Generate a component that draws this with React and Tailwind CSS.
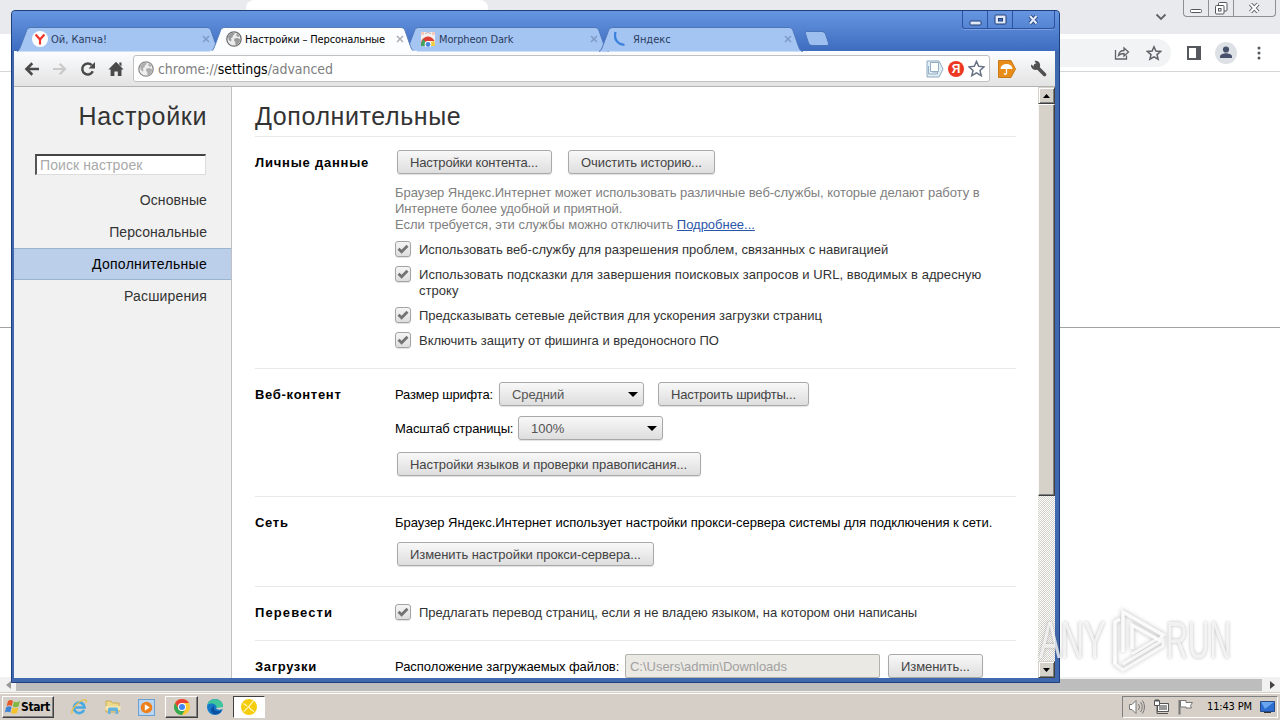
import React from "react";

const ui = "font-['Liberation_Sans',Arial,sans-serif]";
const tahoma = "font-['DejaVu_Sans_Condensed','DejaVu_Sans',sans-serif] [font-stretch:condensed]";

function YandexY() {
  return (
    <svg width="16" height="16" viewBox="0 0 16 16">
      <circle cx="8" cy="8" r="8" fill="#fff" />
      <path d="M3.6 3.6 8 8.6 12.4 3.6M8 8.6v5" fill="none" stroke="#f0332b" strokeWidth="2.2" />
    </svg>
  );
}

function Globe() {
  return (
    <svg width="16" height="16" viewBox="0 0 16 16">
      <circle cx="8" cy="8" r="7.2" fill="#ececec" stroke="#6f6f6f" strokeWidth="1.3" />
      <path d="M2 5.2 4.4 2.4 8 1.6 8.8 3 7 4.6 6.4 6.6 4.8 7.2 5.6 9 4.6 10.4 2.8 9zM8.4 7.6l3.2-.6 2.6 1.2-.6 3-2.8 3-1.6-.6.2-2.4-1.4-1.6zM10.6 2.6l2.2 1.4.8 1.6-2 .2-1.4-1.4z" fill="#9a9a9a" />
    </svg>
  );
}

function StoreIcon() {
  return (
    <svg width="16" height="16" viewBox="0 0 16 16">
      <path d="M1 1h14v14H1z" fill="#f3efee" />
      <path d="M1 1h3v3H1zM12 1h3v3h-3z" fill="#f6c9bd" />
      <path d="M5 2.5q3-2 6 0" stroke="#b9b4b4" fill="none" />
      <path d="M1 13a7 7 0 0 1 13.500-3L8 10z" fill="#dd3d33" />
      <path d="M1 13q.5-3 2.500-5L6 12l-1 3H1z" fill="#43a35b" />
      <path d="M10 11l4.500-1q.5 2 .5 5h-4z" fill="#f1cb43" />
      <circle cx="8" cy="13.400" r="3.300" fill="#fff" />
      <circle cx="8" cy="13.500" r="2.400" fill="#4c86d8" />
    </svg>
  );
}

function Spinner() {
  return (
    <svg width="16" height="16" viewBox="0 0 16 16">
      <path d="M1.500 1C-.5 8 3.500 13.500 10.500 13.800" fill="none" stroke="#3b82dc" strokeWidth="2.300" />
    </svg>
  );
}

function Tab({ icon, title, active, spacing }) {
  return (
    <div className={`relative h-[24px] w-[194px] shrink-0 ${active ? "z-10" : ""}`}>
      <svg className="absolute left-[-6px] top-0" width="212" height="25" viewBox="0 0 212 25">
        <path
          d="M3 24.500C5 24 6 21 7.500 17L12 5C13 1.500 14.500 .5 17 .5H192C195 .5 196.500 1.500 197.500 5L202 18C203.500 22.500 204.500 24 207 24.500"
          fill={active ? "#fcfdff" : "#a4c4f2"}
          stroke={active ? "#5a7fb8" : "#4d76b9"}
          strokeWidth="1"
        />
        {active && <path d="M2 24.500H209" stroke="#fcfdff" strokeWidth="1.500" />}
      </svg>
      <div className={`relative flex h-full items-center pl-[12px] text-[11px] ${tahoma} ${active ? "text-black" : "text-[#2a3d5e]"}`}>
        {icon}
        <span className={`ml-[3px] flex-1 whitespace-nowrap pt-[2px] ${spacing}`}>{title}</span>
        <svg className="mr-[4px]" width="8" height="8" viewBox="0 0 8 8">
          <path d="M1 1l6 6M7 1L1 7" stroke={active ? "#a9adb5" : "#7e9ac6"} strokeWidth="1.500" />
        </svg>
      </div>
    </div>
  );
}

function Button({ children, className = "" }) {
  return (
    <button className={`flex h-6 shrink-0 items-center whitespace-nowrap rounded-[3px] border border-[#a9a9a9] bg-gradient-to-b from-[#f8f8f8] to-[#dedede] pl-3 pt-[2px] text-[13px] text-[#444] shadow-[0_1px_1px_rgba(0,0,0,0.12)] ${className}`}>
      {children}
    </button>
  );
}

function Select({ value, spacing }) {
  return (
    <div className="flex h-6 w-[145px] items-center justify-between rounded-[3px] border border-[#a9a9a9] bg-gradient-to-b from-[#f8f8f8] to-[#dedede] pl-3 pr-[5px] text-[13px] text-[#555] shadow-[0_1px_1px_rgba(0,0,0,0.12)]">
      <span className={`pt-[2px] ${spacing}`}>{value}</span>
      <svg width="10" height="5" viewBox="0 0 10 5"><path d="M0 0h10L5 5z" fill="#000" /></svg>
    </div>
  );
}

function Check({ children }) {
  return (
    <label className="flex items-start text-[13px] leading-4 text-[#333]">
      <span className="mr-2 flex h-4 w-4 shrink-0 items-center justify-center rounded-[3px] border border-[#a3a3a3] bg-gradient-to-b from-[#f5f5f5] to-[#dedede] shadow-[0_1px_1px_rgba(0,0,0,0.12)]">
        <svg width="12" height="10" viewBox="0 0 12 10"><path d="M1.500 4.800 4.600 7.800 10.500 1.800" fill="none" stroke="#737373" strokeWidth="2.800" /></svg>
      </span>
      <span className="-mb-px whitespace-nowrap pt-px">{children}</span>
    </label>
  );
}

function Section({ title, spacing, className = "", titleClass = "pt-px", children }) {
  return (
    <section className={`flex w-[761px] border-t border-[#e8e8e8] ${className}`}>
      <h2 className={`w-[140px] shrink-0 text-[13px] font-bold leading-4 text-black ${titleClass}`}>
        <span className={spacing}>{title}</span>
      </h2>
      <div className="flex-1 text-[13px] leading-4">{children}</div>
    </section>
  );
}

function CaptionButtons() {
  return (
    <div className="flex h-[18px] w-[93px] rounded-b-[3px] border border-t-0 border-[#2d529f] shadow-[0_1px_0_#7ba0e4]">
      <div className="flex w-[25px] items-center justify-center border-r border-[#2d529f]">
        <svg width="13" height="12" viewBox="0 0 13 12"><rect x="1" y="7" width="11" height="4" rx="1" fill="#dfe9fa" stroke="#233e75" /></svg>
      </div>
      <div className="flex w-[25px] items-center justify-center border-r border-[#2d529f]">
        <svg width="13" height="12" viewBox="0 0 13 12">
          <rect x="1" y="1" width="11" height="9" rx="1" fill="#dfe9fa" stroke="#233e75" />
          <rect x="4.500" y="4.500" width="4" height="2.500" fill="#4270c4" stroke="#233e75" />
        </svg>
      </div>
      <div className="flex flex-1 items-center justify-center">
        <svg width="13" height="12" viewBox="0 0 13 12">
          <path d="M3 2l6.500 7.500M9.500 2 3 9.500" stroke="#233e75" strokeWidth="4" />
          <path d="M3 2l6.500 7.500M9.500 2 3 9.500" stroke="#dfe9fa" strokeWidth="2.200" />
        </svg>
      </div>
    </div>
  );
}

function Toolbar() {
  return (
    <div className="flex h-[36px] items-center border-b border-[#b3b3b3] bg-gradient-to-b from-[#fcfdff] to-[#e3e3e3]">
      <div className="flex w-[119px] items-center">
        <svg className="ml-[10px]" width="16" height="16" viewBox="0 0 16 16"><path d="M15 8H3M8.300 2.300 2.500 8l5.800 5.700" fill="none" stroke="#4a4a4a" strokeWidth="2.600" /></svg>
        <svg className="ml-[12px]" width="16" height="16" viewBox="0 0 16 16"><path d="M1 8h12M7.700 2.800 13 8l-5.300 5.200" fill="none" stroke="#c9c9c9" strokeWidth="2.200" /></svg>
        <svg className="ml-[12px]" width="16" height="16" viewBox="0 0 16 16">
          <path d="M12.800 10.200A5.500 5.500 0 1 1 11.800 4.200" fill="none" stroke="#4a4a4a" strokeWidth="2.500" />
          <path d="M15 1v6.500H8.500z" fill="#4a4a4a" />
        </svg>
        <svg className="ml-[12px]" width="16" height="16" viewBox="0 0 16 16"><path d="M8 .8 15.600 8.500H13.500V15H9.800v-4.500H6.400V15H2.600V8.500H.4zM11.300 1.500h2.200v4l-2.200-2z" fill="#4a4a4a" /></svg>
      </div>
      <div className="flex h-[27px] w-[857px] items-center rounded-[3px] border border-[#c0c0c0] bg-white pl-[4px]">
        <span className="opacity-80"><Globe /></span>
        <span className={`ml-[4px] flex-1 whitespace-nowrap pt-px text-[14px] text-[#808080] ${tahoma} tracking-[-0.05px]`}>
          chrome://<span className="text-black">settings</span>/advanced
        </span>
        <svg width="18" height="18" viewBox="0 0 18 18">
          <path d="M1 1h12l4 8-4 8H1z" fill="#e4eef5" stroke="#8ba9c0" />
          <path d="M4.500 2.500h8v9h-8z" fill="#fff" stroke="#92afc5" />
          <path d="M2.500 6v8h9v-2h-5" fill="none" stroke="#92afc5" />
        </svg>
        <span className="ml-[4px] flex h-4 w-4 items-center justify-center rounded-full bg-[#ec3823] text-[12px] font-bold leading-none text-white">Я</span>
        <svg className="ml-[4px] mr-[4px]" width="17" height="17" viewBox="0 0 17 17"><path d="M8.500 1.300l2.200 5 5.300.5-4 3.600 1.200 5.300-4.700-2.800-4.700 2.800L5 10.400 1 6.800l5.300-.5z" fill="#fff" stroke="#697386" strokeWidth="1.500" /></svg>
      </div>
      <svg className="ml-[8px]" width="18" height="18" viewBox="0 0 18 18">
        <path d="M.5 .5H13l4.500 8.500-4.500 8.500H.5z" fill="#e98d19" stroke="#c87a1b" />
        <path d="M2.500 9a6 5 0 0 1 12 0z" fill="#fff" />
        <path d="M8.500 8v5.500q-1 1.500-2.500 0" fill="none" stroke="#fff" strokeWidth="1.300" />
      </svg>
      <svg className="ml-[14px]" width="17" height="17" viewBox="0 0 17 17">
        <path d="M5.500 5.500l9 9" stroke="#505050" strokeWidth="3.600" strokeLinecap="round" />
        <path d="M4.500.8A4.600 4.600 0 1 1 1 4.500l3 2 2.500-2.300z" fill="#505050" />
      </svg>
    </div>
  );
}

function Sidebar() {
  const items = [
    ["Основные", "tracking-[0.1px]"],
    ["Персональные", "tracking-[0.05px]"],
    ["Дополнительные", "tracking-[0.3px]"],
    ["Расширения", "tracking-[0.15px]"],
  ];
  return (
    <aside className="flex w-[218px] shrink-0 flex-col border-r border-[#c0c0c0] bg-[#f1f1f1]">
      <h1 className="mr-6 mt-[12px] h-[35px] text-right text-[25px] leading-[34px] tracking-[0.65px] text-[#333]">Настройки</h1>
      <div className="ml-[21px] mt-[20px] flex h-[21px] w-[171px] items-center border border-b-[#ddd] border-l-2 border-r-[#ddd] border-t-2 border-l-[#555] border-t-[#444] bg-white pl-[3px] text-[14px] tracking-[0.1px] text-[#a9a9a9]">Поиск настроек</div>
      <nav className="mt-[9px]">
        {items.map(([name, sp], i) => (
          <div key={name} className={`flex h-8 items-center justify-end border-y pr-6 pt-px text-[14px] ${sp} ${i === 2 ? "border-[#9bb4cf] bg-[#bbceea] text-black" : "border-transparent text-[#333]"}`}>{name}</div>
        ))}
      </nav>
    </aside>
  );
}

function ScrollButton({ down }) {
  return (
    <div className="flex h-[17px] w-[17px] shrink-0 items-center justify-center border border-b-[#404040] border-l-[#d6d2ca] border-r-[#404040] border-t-[#d6d2ca] bg-[#d6d2ca] shadow-[inset_1px_1px_0_#fff,inset_-1px_-1px_0_#808080]">
      <svg width="7" height="4" viewBox="0 0 7 4"><path d={down ? "M0 0h7L3.500 4z" : "M0 4h7L3.500 0z"} fill="#000" /></svg>
    </div>
  );
}

function Settings() {
  return (
    <div className="flex h-[591px] overflow-hidden bg-white">
      <Sidebar />
      <main className="ml-[23px] flex-1">
        <h1 className="h-[49px] pt-[12px] text-[25px] leading-[34px] tracking-[0.6px] text-[#333]">Дополнительные</h1>
        <Section title="Личные данные" className="h-[232px] pt-[13px]" titleClass="pt-[5px]" spacing="tracking-[0.78px]">
          <div className="ml-[2px] flex gap-4">
            <Button className="w-[155px] tracking-[-0.18px]">Настройки контента...</Button>
            <Button className="w-[147px] tracking-[-0.07px]">Очистить историю...</Button>
          </div>
          <p className="mt-[11px] whitespace-nowrap text-[#808080]">
            <span className="tracking-[-0.05px]">Браузер Яндекс.Интернет может использовать различные веб-службы, которые делают работу в</span><br />
            <span className="tracking-[-0.13px]">Интернете более удобной и приятной.</span><br />
            <span className="tracking-[-0.02px]">Если требуется, эти службы можно отключить <a className="text-[#2a56a8] underline">Подробнее...</a></span>
          </p>
          <div className="mt-[8px] flex flex-col gap-[9px]">
            <Check><span className="tracking-[0px]">Использовать веб-службу для разрешения проблем, связанных с навигацией</span></Check>
            <Check><span className="tracking-[0.05px]">Использовать подсказки для завершения поисковых запросов и URL, вводимых в адресную<br />строку</span></Check>
            <Check><span className="tracking-[0px]">Предсказывать сетевые действия для ускорения загрузки страниц</span></Check>
            <Check><span className="tracking-[-0.02px]">Включить защиту от фишинга и вредоносного ПО</span></Check>
          </div>
        </Section>
        <Section title="Веб-контент" className="h-[128px] pt-[13px]" titleClass="pt-[5px]" spacing="tracking-[0.7px]">
          <div className="flex items-center">
            <span className="w-[104px] whitespace-nowrap pt-px tracking-[-0.16px]">Размер шрифта:</span>
            <Select value="Средний" spacing="tracking-[-0.1px]" />
            <Button className="ml-[14px] w-[151px] tracking-[-0.2px]">Настроить шрифты...</Button>
          </div>
          <div className="mt-[10px] flex items-center">
            <span className="w-[123px] whitespace-nowrap pt-px tracking-[-0.16px]">Масштаб страницы:</span>
            <Select value="100%" spacing="tracking-[0px]" />
          </div>
          <Button className="ml-[2px] mt-[12px] w-[304px] tracking-[-0.05px]">Настройки языков и проверки правописания...</Button>
        </Section>
        <Section title="Сеть" className="h-[90px] pt-[17px]" spacing="tracking-[0.7px]">
          <p className="whitespace-nowrap pt-px tracking-[-0.02px]">Браузер Яндекс.Интернет использует настройки прокси-сервера системы для подключения к сети.</p>
          <Button className="ml-[2px] mt-[11px] w-[257px] tracking-[-0.06px]">Изменить настройки прокси-сервера...</Button>
        </Section>
        <Section title="Перевести" className="h-[54px] pt-[17px]" spacing="tracking-[1.1px]">
          <Check><span className="tracking-[-0.03px]">Предлагать перевод страниц, если я не владею языком, на котором они написаны</span></Check>
        </Section>
        <Section title="Загрузки" className="h-[54px] pt-[13px]" titleClass="pt-[5px]" spacing="tracking-[0.65px]">
          <div className="flex items-center whitespace-nowrap">
            <span className="w-[230px] pt-px tracking-[-0.05px]">Расположение загружаемых файлов:</span>
            <span className="flex h-6 w-[255px] items-center rounded-[2px] border border-[#b3b1ab] bg-[#ebe9e4] pl-1 pt-[2px] tracking-[-0.02px] text-[#a0a0a0]">C:\Users\admin\Downloads</span>
            <Button className="ml-2 w-[95px] tracking-[-0.06px]">Изменить...</Button>
          </div>
        </Section>
      </main>
      <div className="flex w-[17px] flex-col bg-[#e9e7e3]">
        <ScrollButton />
        <div className="h-[392px] border border-b-[#404040] border-l-[#f8f8f6] border-r-[#404040] border-t-white bg-[#d6d2ca] shadow-[inset_-1px_-1px_0_#808080]" />
        <div className="flex-1 bg-[repeating-conic-gradient(#d2cfc9_0_25%,#fff_0_50%)] bg-[length:2px_2px]" />
        <ScrollButton down />
      </div>
    </div>
  );
}

function FrontWindow() {
  return (
    <div className="absolute left-[11px] top-[10px] h-[673px] w-[1049px] overflow-hidden rounded-t-[4px] border border-[#1f3f7c] bg-[#3f68ae]">
      <div className="flex h-[40px] items-end bg-gradient-to-b from-[#6696e0] to-[#3e6cc0] pl-[8px]">
        <Tab icon={<YandexY />} title="Ой, Капча!" spacing="tracking-[0px]" />
        <Tab icon={<Globe />} title="Настройки – Персональные" active spacing="tracking-[-0.15px]" />
        <Tab icon={<StoreIcon />} title="Morpheon Dark" spacing="tracking-[-0.15px]" />
        <Tab icon={<Spinner />} title="Яндекс" spacing="tracking-[0px]" />
        <svg className="mb-[4px] ml-[8px]" width="26" height="16" viewBox="0 0 26 16"><path d="M2.500.5H18q2.500 0 3.500 2.500l3 9q.5 2.500-1.500 2.500H8q-2.500 0-3.500-2.500l-3-9Q.500.5 2.500.5z" fill="#9dbff0" stroke="#4a74ba" /></svg>
        <div className="ml-auto self-start pr-[4px]"><CaptionButtons /></div>
      </div>
      <div className="ml-[2px] w-[1041px]">
        <Toolbar />
        <Settings />
      </div>
    </div>
  );
}

function BackWindow() {
  return (
    <div className="flex h-[693px] flex-col bg-white">
      <div className="flex h-[34px] items-start bg-[#e8eaed]">
        <div className="ml-[246px] h-full w-[242px] rounded-t-lg bg-white" />
        <svg className="ml-auto mt-[13px]" width="12" height="8" viewBox="0 0 12 8"><path d="M1.500 1.500 6 6l4.500-4.500" fill="none" stroke="#5f6368" strokeWidth="1.800" /></svg>
        <div className="ml-[16px] mr-[4px] flex h-[17px] w-[93px] rounded-b-[4px] border border-t-0 border-[#8e8f92]">
          <div className="flex w-[25px] items-center justify-center border-r border-[#8e8f92]"><svg width="13" height="6" viewBox="0 0 13 6" className="mt-[5px]"><rect x=".5" y="1.500" width="11" height="3" rx="1" fill="#fff" stroke="#55565c" /></svg></div>
          <div className="flex w-[25px] items-center justify-center border-r border-[#8e8f92]"><svg width="13" height="13" viewBox="0 0 13 13"><rect x="3.500" y=".5" width="8.500" height="8.500" rx="1" fill="#fff" stroke="#55565c" /><rect x=".5" y="3.500" width="8.500" height="8.500" rx="1" fill="#fff" stroke="#55565c" /><rect x="3.500" y="6.500" width="2.500" height="2.500" fill="#fff" stroke="#55565c" /></svg></div>
          <div className="flex flex-1 items-center justify-center"><svg width="13" height="12" viewBox="0 0 13 12"><path d="M2.500 2l7.500 8M10 2l-7.500 8" stroke="#55565c" strokeWidth="4" /><path d="M2.500 2l7.500 8M10 2l-7.500 8" stroke="#fff" strokeWidth="2.200" /></svg></div>
        </div>
      </div>
      <div className="flex h-[38px] shrink-0 items-center border-b border-[#d5d6d8]">
        <div className="ml-[120px] flex h-[28px] w-[1051px] items-center justify-end rounded-full bg-[#f1f3f4] pr-[9px]">
          <svg width="16" height="16" viewBox="0 0 16 16"><path d="M1.500 5v9h11v-3.500M4.500 10.500c.5-3.500 2.500-5 5.500-5V3l4.500 4-4.500 4V8.500c-2.500 0-4 .5-5.500 2z" fill="none" stroke="#5f6368" strokeWidth="1.300" /></svg>
          <svg className="ml-[16px]" width="16" height="16" viewBox="0 0 16 16"><path d="M8 1.800l1.900 4.300 4.700.4-3.600 3.100 1.100 4.600L8 11.800l-4.100 2.400L5 9.600 1.400 6.500l4.700-.4z" fill="none" stroke="#5f6368" strokeWidth="1.500" /></svg>
        </div>
        <svg className="ml-[16px]" width="14" height="14" viewBox="0 0 14 14"><path d="M1 1h12v12H1z" fill="none" stroke="#55585d" strokeWidth="2" /><path d="M9 1h4v12H9z" fill="#55585d" /></svg>
        <svg className="ml-[14px]" width="22" height="22" viewBox="0 0 22 22"><circle cx="11" cy="11" r="11" fill="#dde1e6" /><circle cx="11" cy="7.500" r="3.100" fill="#46506b" /><path d="M5 16v-1.500c0-2.500 4-3.300 6-3.300s6 .8 6 3.300V16z" fill="#46506b" /></svg>
        <svg className="ml-[20px]" width="4" height="14" viewBox="0 0 4 14"><circle cx="2" cy="2" r="1.500" fill="#55585d" /><circle cx="2" cy="7" r="1.500" fill="#55585d" /><circle cx="2" cy="12" r="1.500" fill="#55585d" /></svg>
      </div>
      <div className="h-[256px] shrink-0 border-b border-[#a2a2a2]" />
      <div className="flex-1" />
      <div className="flex h-[15px] items-center justify-between bg-[#f1f1f1]">
        <svg className="ml-[6px]" width="5" height="8" viewBox="0 0 5 8"><path d="M5 0v8L0 4z" fill="#999" /></svg>
        <div className="ml-[5px] h-[12px] flex-1 bg-[#bdbdbd]" />
        <svg className="ml-[8px] mr-[5px]" width="5" height="8" viewBox="0 0 5 8"><path d="M0 0v8l5-4z" fill="#444" /></svg>
      </div>
      <div className="h-[1px] bg-[#d4d0c8]" />
    </div>
  );
}

function Watermark() {
  const word = "[text-shadow:0_0_4px_rgba(90,90,90,0.45)] text-white/75";
  return (
    <div className="absolute left-[1039px] top-[607px] flex h-[68px] w-[200px] items-center font-['Liberation_Sans',Arial,sans-serif] text-[51px] font-normal">
      <span className={`${word} w-[70px] origin-left scale-x-[0.64] tracking-[-0.5px]`}>ANY</span>
      <svg width="60" height="66" viewBox="0 0 60 66" className="shrink-0 [filter:drop-shadow(0_0_2px_rgba(80,80,80,0.45))]">
        <path d="M6 56V14l5-3M14 44V4l40 23-4 5-27-15v24" fill="none" stroke="#fff" strokeOpacity=".9" strokeWidth="3.500" />
        <path d="M6 48v8l8 6 40-24v-6L14 56M23 46l25-15" fill="none" stroke="#fff" strokeOpacity=".8" strokeWidth="3" />
      </svg>
      <span className={`${word} ml-[-3px] origin-left scale-x-[0.59]`}>RUN</span>
    </div>
  );
}

function Taskbar() {
  const raised = "border border-b-[#404040] border-l-white border-r-[#404040] border-t-white shadow-[inset_-1px_-1px_0_#808080]";
  return (
    <div className={`flex h-[27px] items-center border-t border-white bg-[#d6cfc7] pl-[2px] ${tahoma}`}>
      <div className={`flex h-[22px] w-[52px] items-center pl-[1px] ${raised}`}>
        <svg width="17" height="16" viewBox="0 0 17 16" className="shrink-0">
          <path d="M4 2q2.500-1.800 5 0L7.800 7Q5 5.600 2.600 7z" fill="#e65a28" />
          <path d="M10 2.500q3 1.500 6-.5l-1.500 5.500q-3 1.500-5.800 0z" fill="#80b842" />
          <path d="M2.300 8q2.700-1.600 5.300 0l-1.400 5.500Q3.500 12 .8 13.500z" fill="#3f83d5" />
          <path d="M8.500 8.500q3 1.700 5.800 0L13 13.800q-3 1.700-6 0z" fill="#f5c22b" />
        </svg>
        <span className="text-[12px] font-bold tracking-[-0.4px] text-black">Start</span>
      </div>
      <svg className="ml-[16px]" width="18" height="18" viewBox="0 0 18 18">
        <path d="M14 12A5.300 5.300 0 1 1 14.500 9.500H5" fill="none" stroke="#49a9e2" strokeWidth="2.700" />
        <path d="M2.500 15.500C-1 13 10 1 15.500 2q1.500.5.5 3" fill="none" stroke="#e8c04d" strokeWidth="1.300" />
      </svg>
      <svg className="ml-[16px]" width="18" height="18" viewBox="0 0 18 18">
        <path d="M2 3h5l1.500 2H15v9H2z" fill="#eed88a" stroke="#c9ad58" />
        <path d="M1.500 8h15v4h-15z" fill="#f5e7ae" />
        <path d="M4 16v-5q0-1.500 1.500-1.500h7q1.500 0 1.500 1.500v5h-2.500v-3h-5v3z" fill="#64b2df" />
      </svg>
      <svg className="ml-[16px]" width="17" height="17" viewBox="0 0 17 17">
        <rect x=".5" y=".5" width="16" height="16" fill="#b9d5ef" stroke="#6ba0d5" />
        <circle cx="8.500" cy="8.500" r="5.800" fill="#ef7f1a" /><path d="M6.800 5.200v6.600l5-3.300z" fill="#fff" />
      </svg>
      <div className={`ml-[10px] flex h-[22px] w-[33px] items-center justify-center ${raised}`}>
        <svg width="16" height="16" viewBox="0 0 16 16">
          <circle cx="8" cy="8" r="8" fill="#fcc934" />
          <path d="M1.070 4A8 8 0 0 1 14.930 4H8a4 4 0 0 0-3.460 6z" fill="#ea4335" />
          <path d="M1.070 4A8 8 0 0 0 8 16l3.460-6A4 4 0 0 1 4.540 10z" fill="#34a853" />
          <circle cx="8" cy="8" r="4" fill="#fff" /><circle cx="8" cy="8" r="3" fill="#4285f4" />
        </svg>
      </div>
      <svg className="ml-[8px]" width="18" height="18" viewBox="0 0 18 18">
        <circle cx="9" cy="9" r="8" fill="#1479c9" />
        <path d="M1.500 7C3-1 16-.5 17 7.500c.3 3-5 4-6.500 2.500C11 6 5 4 1.500 7z" fill="#3fc69b" />
        <path d="M8 8c-1 5 4 6.500 8 4-3 6-11 5.500-11 0 0-2 1.500-3.500 3-4z" fill="#0c4f9f" />
        <path d="M10 10q1 2.500 6.500 1.200L17.500 9z" fill="#d6cfc7" />
      </svg>
      <div className="ml-[9px] flex h-[22px] w-[32px] items-center justify-center border border-b-white border-l-[#404040] border-r-white border-t-[#404040] bg-white">
        <svg width="16" height="16" viewBox="0 0 16 16"><circle cx="8" cy="8" r="8" fill="#f6cd0c" /><path d="M12.500 1.500C10 6 7 8 3 12.500M8 8q1.500 3 5 4.500M2.500 4.500 6 7" stroke="#fff5b5" strokeWidth="1.300" fill="none" /></svg>
      </div>
      <div className="ml-auto mr-[2px] flex h-[22px] w-[156px] items-center border border-b-white border-l-[#808080] border-r-white border-t-[#808080] pl-[5px]">
        <svg width="18" height="16" viewBox="0 0 18 16"><path d="M1.500 5.500H4l4-4v13l-4-4H1.500z" fill="#fff" stroke="#777" /><path d="M10.500 5q2 3 0 6M12.500 3q3.500 5 0 10M14.500 1.500q4 6.500 0 13" fill="none" stroke="#777" /></svg>
        <svg className="ml-[7px]" width="17" height="16" viewBox="0 0 17 16"><path d="M4.500 4.500h11v8h-11z" fill="#999" stroke="#555" /><path d="M5.500 5.500h9v6h-9z" fill="none" stroke="#fff" /><path d="M1.500 1.500h5v5h-5z" fill="#fff" stroke="#555" /><path d="M4 7v7.500h11" fill="none" stroke="#555" /><path d="M3 0v3M5 0v3" stroke="#555" /></svg>
        <svg className="ml-[7px]" width="17" height="16" viewBox="0 0 17 16"><path d="M2.500 1v14.500" stroke="#777" strokeWidth="2" /><path d="M3.500 1.500H9v2h6.500l-2 3 1 2.500H9V8H3.500z" fill="#fff" stroke="#777" /></svg>
        <span className="ml-[13px] w-[53px] whitespace-nowrap pt-px text-[11px] tracking-[-0.15px] text-black">11:43 PM</span>
        <svg width="15" height="13" viewBox="0 0 15 13"><path d="M.5.5h14v10H.5z" fill="#2b6dd1" stroke="#254a87" /><path d="M1 1h13L5 8z" fill="#6aa5ee" /><path d="M4 11.500h7" stroke="#333" /></svg>
      </div>
    </div>
  );
}

export default function App() {
  return (
    <div className={`relative h-[720px] w-[1280px] overflow-hidden bg-white ${ui}`}>
      <BackWindow />
      <Taskbar />
      <FrontWindow />
      <Watermark />
    </div>
  );
}
